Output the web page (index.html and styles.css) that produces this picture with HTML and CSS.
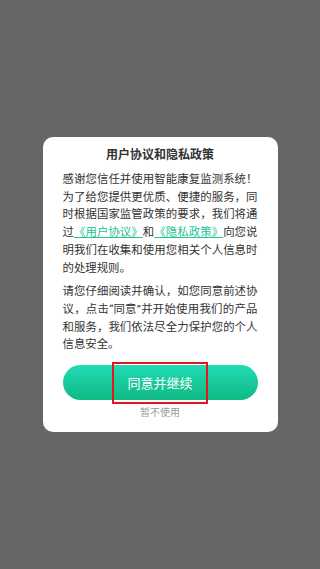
FILE: index.html
```html
<!DOCTYPE html>
<html lang="zh-CN">
  <head>
    <meta charset="UTF-8" />
    <meta name="viewport" content="width=device-width, initial-scale=1.0" />
    <title>用户协议和隐私政策</title>
    <link rel="stylesheet" href="styles.css">
  </head>
  <body>
    <div class="mask">
      <div class="dialog">
        <h3 class="dialog-title">用户协议和隐私政策</h3>
        <div class="dialog-body">
          <p>
            感谢您信任并使用智能康复监测系统！为了给您提供更优质、便捷的服务，同时根据国家监管政策的要求，我们将通过<a href="">《用户协议》</a>和<a href="">《隐私政策》</a>向您说明我们在收集和使用您相关个人信息时的处理规则。
          </p>
          <p>
            请您仔细阅读并确认，如您同意前述协议，点击“同意”并开始使用我们的产品和服务，我们依法尽全力保护您的个人信息安全。
          </p>
        </div>
        <button class="agree"><span class="agree-text">同意并继续</span></button>
        <a href="" class="refuse">暂不使用</a>
      </div>
    </div>
  </body>
</html>
```

FILE: styles.css
```css
* {
  font-family: Roboto, "Noto Sans CJK SC", sans-serif;
  box-sizing: border-box;
}
body {
  margin: 0;
  background-color: #666666;
}
.mask {
  display: flex;
  align-items: center;
  justify-content: center;
  min-height: 100vh;
}
.dialog {
  width: 235px;
  background-color: #fff;
  border-radius: 10px;
  padding: 9px 20px 12px;
  display: flex;
  flex-direction: column;
  align-items: center;
}
.dialog-title {
  margin: 0;
  font-size: 12px;
  line-height: 18px;
  font-weight: bold;
  color: #333;
}
.dialog-body {
  margin-top: 7px;
  width: 100%;
}
.dialog-body p {
  margin: 0;
  font-size: 11.4px;
  line-height: 17.7px;
  color: #333;
  text-align: justify;
}
.dialog-body p + p {
  margin-top: 6px;
}
.dialog-body a {
  color: #22c495;
  text-decoration: underline;
}
.agree {
  margin-top: 11px;
  width: 100%;
  height: 35px;
  border: none;
  border-radius: 18px;
  background: linear-gradient(to bottom, #22dbb6, #0fb983);
  display: flex;
  align-items: center;
  justify-content: center;
  padding: 0;
}
.agree-text {
  border: 2px solid #e8141b;
  width: 96px;
  height: 42px;
  display: flex;
  align-items: center;
  justify-content: center;
  color: #fff;
  font-size: 13px;
}
.refuse {
  margin-top: 6px;
  font-size: 10px;
  line-height: 14px;
  color: #999;
  text-decoration: none;
}
```
